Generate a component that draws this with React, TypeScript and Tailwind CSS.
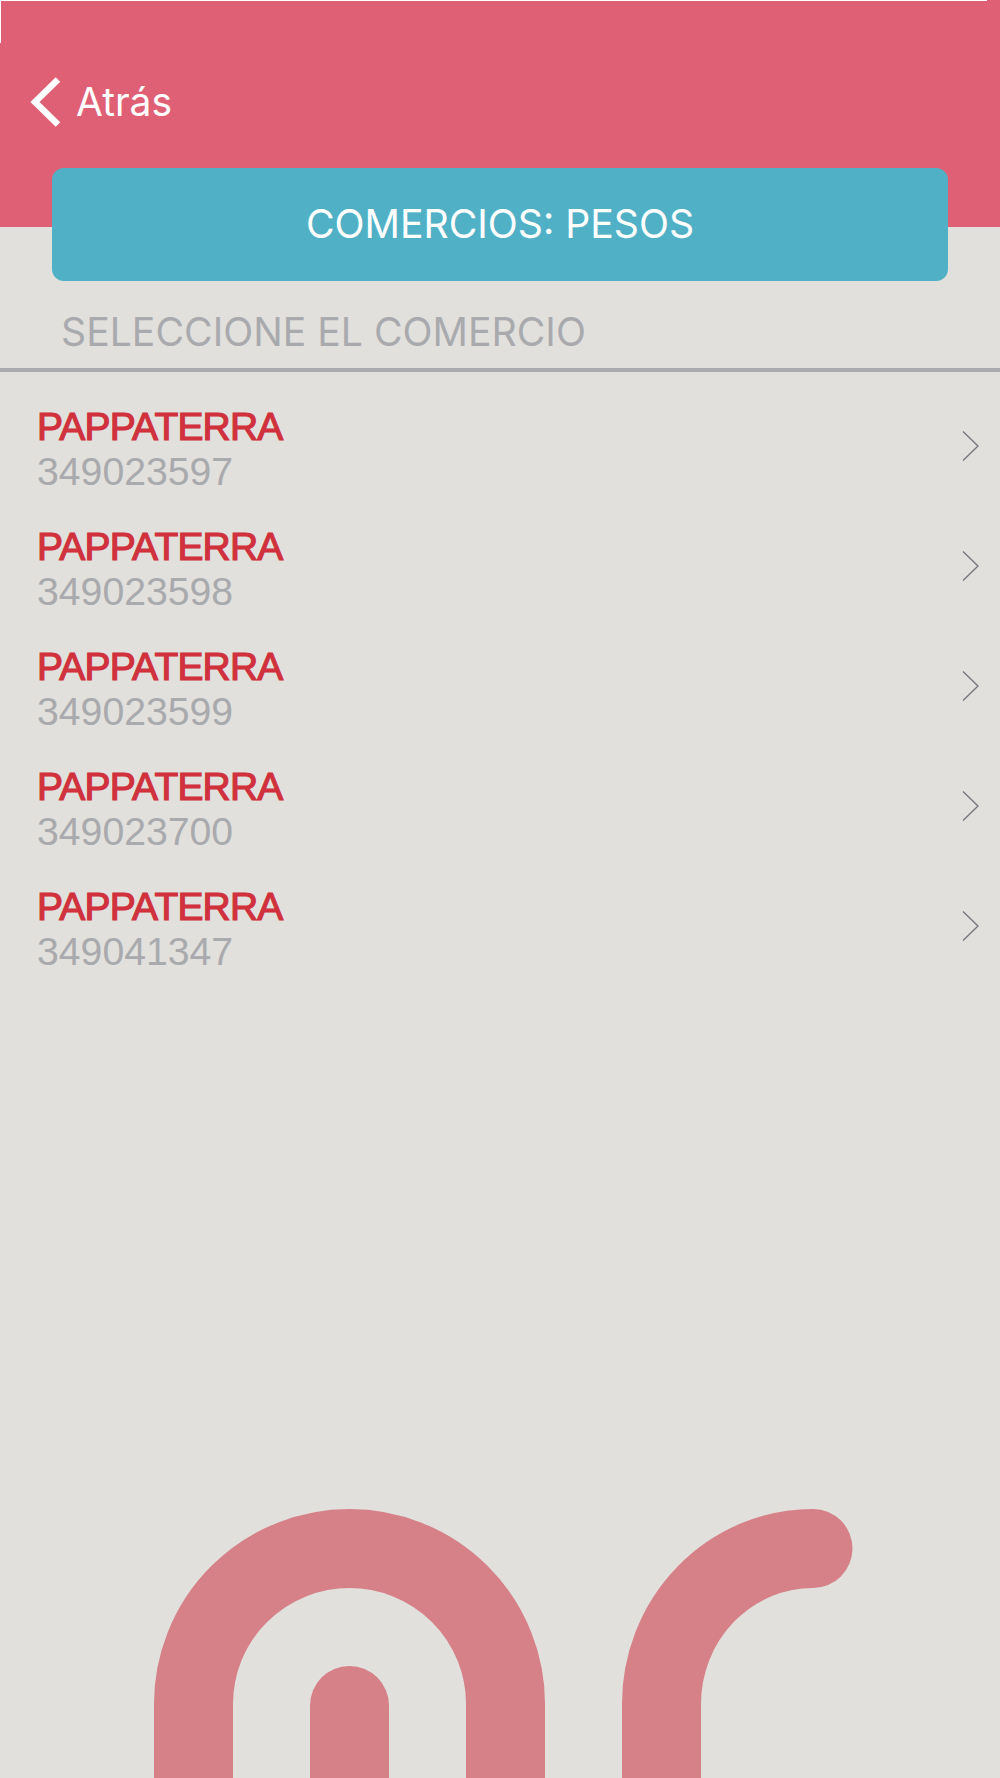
const STORES = ['349023597', '349023598', '349023599', '349023700', '349041347']

function StoreRow({ code }: { code: string }) {
  return (
    <div className="flex h-[120px] items-center justify-between pl-[37px] pr-[20px]">
      <div className="flex flex-col pt-[5px] font-['Liberation_Sans',sans-serif]">
        <span className="text-[39px] leading-[45px] tracking-[-0.8px] text-[#d0313d] [-webkit-text-stroke:1.2px_#d0313d]">PAPPATERRA</span>
        <span className="text-[39.2px] leading-[45px] text-[#a9aaae]">{code}</span>
      </div>
      <svg width="18" height="32" viewBox="0 0 18 32" fill="none" stroke="#77777f" strokeWidth="1.4">
        <path d="M1 1.5 L16 16 L1 30.5" />
      </svg>
    </div>
  )
}

export default function App() {
  return (
    <div className="relative flex h-[1778px] w-[1000px] flex-col overflow-hidden bg-[#e1e0dc] font-['Inter',sans-serif]">
      {/* capture artefact: thin white line along the top and left */}
      <div className="absolute left-0 top-0 h-px w-[987px] bg-white" />
      <div className="absolute left-0 top-0 h-[43px] w-px bg-white" />

      <div className="h-[227px] bg-[#df6075] pt-[77px]">
        <div className="flex items-center pl-[29px]">
          <svg width="32" height="50" viewBox="0 0 32 50" fill="none" stroke="#ffffff" strokeWidth="6.5">
            <path d="M29 2.5 L6 25 L29 47.5" />
          </svg>
          <span className="ml-[15px] text-[39px] leading-[50px] text-white">Atrás</span>
        </div>
      </div>

      <div className="mx-[52px] mt-[-59px] flex h-[113px] items-center justify-center rounded-[12px] bg-[#50b1c6] text-[39.2px] text-white">
        COMERCIOS: PESOS
      </div>

      <div className="mt-[28px] h-[63px] border-b-[4px] border-[#a9aaae] pl-[61px] text-[39.2px] leading-[46px] text-[#a9aaae]">
        SELECCIONE EL COMERCIO
      </div>

      <div className="pt-[14px]">
        {STORES.map((code) => (
          <StoreRow key={code} code={code} />
        ))}
      </div>

      {/* logo, cut off by the bottom of the screen */}
      <svg className="mt-auto" width="1000" height="278" viewBox="0 1500 1000 278" fill="none" stroke="#d68087" strokeWidth="79" strokeLinecap="round">
        <path d="M193.5 1800 V1704 A156 155.5 0 0 1 505.5 1704 V1800" />
        <path d="M349.5 1800 V1705.5" />
        <path d="M661.5 1800 V1704 A151.5 155.5 0 0 1 813 1548.5" />
      </svg>
    </div>
  )
}
